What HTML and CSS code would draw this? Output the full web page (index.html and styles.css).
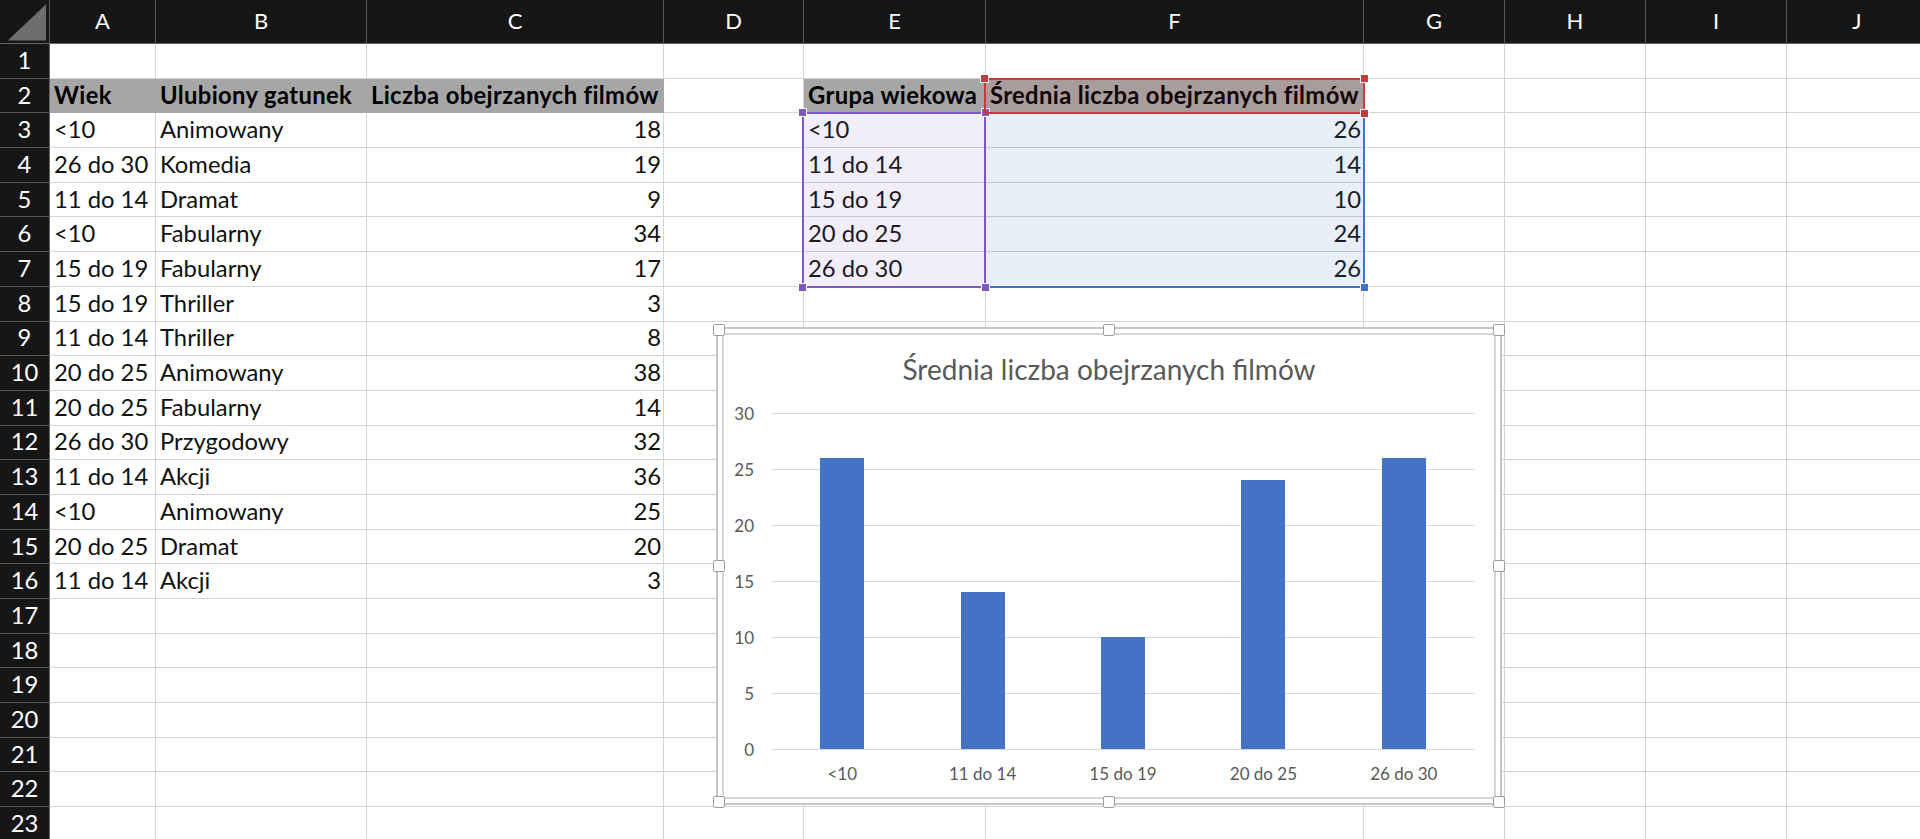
FILE: index.html
```html
<!DOCTYPE html>
<html lang="pl">
<head>
<meta charset="utf-8">
<title>Arkusz</title>
<link rel="stylesheet" href="styles.css">
</head>
<body>
<div class="sheet-wrap">
  <div class="sheet">
    <div class="corner"><svg viewBox="0 0 50 44" width="50" height="44"><polygon points="8,42 47,42 47,5" fill="#6e6e6e"/></svg></div>
    <div class="ch">A</div><div class="ch">B</div><div class="ch">C</div><div class="ch">D</div><div class="ch">E</div><div class="ch">F</div><div class="ch">G</div><div class="ch">H</div><div class="ch">I</div><div class="ch">J</div>

    <div class="rh">1</div><div></div><div></div><div></div><div></div><div></div><div></div><div></div><div></div><div></div><div></div>

    <div class="rh">2</div><div class="hd">Wiek</div><div class="hd">Ulubiony gatunek</div><div class="hd">Liczba obejrzanych filmów</div><div></div><div class="hd">Grupa wiekowa</div><div class="hd">Średnia liczba obejrzanych filmów</div><div></div><div></div><div></div><div></div>

    <div class="rh">3</div><div>&lt;10</div><div>Animowany</div><div class="num">18</div><div></div><div>&lt;10</div><div class="num">26</div><div></div><div></div><div></div><div></div>
    <div class="rh">4</div><div>26 do 30</div><div>Komedia</div><div class="num">19</div><div></div><div>11 do 14</div><div class="num">14</div><div></div><div></div><div></div><div></div>
    <div class="rh">5</div><div>11 do 14</div><div>Dramat</div><div class="num">9</div><div></div><div>15 do 19</div><div class="num">10</div><div></div><div></div><div></div><div></div>
    <div class="rh">6</div><div>&lt;10</div><div>Fabularny</div><div class="num">34</div><div></div><div>20 do 25</div><div class="num">24</div><div></div><div></div><div></div><div></div>
    <div class="rh">7</div><div>15 do 19</div><div>Fabularny</div><div class="num">17</div><div></div><div>26 do 30</div><div class="num">26</div><div></div><div></div><div></div><div></div>
    <div class="rh">8</div><div>15 do 19</div><div>Thriller</div><div class="num">3</div><div></div><div></div><div></div><div></div><div></div><div></div><div></div>
    <div class="rh">9</div><div>11 do 14</div><div>Thriller</div><div class="num">8</div><div></div><div></div><div></div><div></div><div></div><div></div><div></div>
    <div class="rh">10</div><div>20 do 25</div><div>Animowany</div><div class="num">38</div><div></div><div></div><div></div><div></div><div></div><div></div><div></div>
    <div class="rh">11</div><div>20 do 25</div><div>Fabularny</div><div class="num">14</div><div></div><div></div><div></div><div></div><div></div><div></div><div></div>
    <div class="rh">12</div><div>26 do 30</div><div>Przygodowy</div><div class="num">32</div><div></div><div></div><div></div><div></div><div></div><div></div><div></div>
    <div class="rh">13</div><div>11 do 14</div><div>Akcji</div><div class="num">36</div><div></div><div></div><div></div><div></div><div></div><div></div><div></div>
    <div class="rh">14</div><div>&lt;10</div><div>Animowany</div><div class="num">25</div><div></div><div></div><div></div><div></div><div></div><div></div><div></div>
    <div class="rh">15</div><div>20 do 25</div><div>Dramat</div><div class="num">20</div><div></div><div></div><div></div><div></div><div></div><div></div><div></div>
    <div class="rh">16</div><div>11 do 14</div><div>Akcji</div><div class="num">3</div><div></div><div></div><div></div><div></div><div></div><div></div><div></div>
    <div class="rh">17</div><div></div><div></div><div></div><div></div><div></div><div></div><div></div><div></div><div></div><div></div>
    <div class="rh">18</div><div></div><div></div><div></div><div></div><div></div><div></div><div></div><div></div><div></div><div></div>
    <div class="rh">19</div><div></div><div></div><div></div><div></div><div></div><div></div><div></div><div></div><div></div><div></div>
    <div class="rh">20</div><div></div><div></div><div></div><div></div><div></div><div></div><div></div><div></div><div></div><div></div>
    <div class="rh">21</div><div></div><div></div><div></div><div></div><div></div><div></div><div></div><div></div><div></div><div></div>
    <div class="rh">22</div><div></div><div></div><div></div><div></div><div></div><div></div><div></div><div></div><div></div><div></div>
    <div class="rh">23</div><div></div><div></div><div></div><div></div><div></div><div></div><div></div><div></div><div></div><div></div>
  </div>

  <div class="rng rng-blue"><span class="hdl br"></span></div>
  <div class="rng rng-purple"><span class="hdl tl"></span><span class="hdl tr"></span><span class="hdl bl"></span><span class="hdl br"></span></div>
  <div class="rng rng-red"><span class="hdl tl"></span><span class="hdl tr"></span><span class="hdl br"></span></div>

  <div class="chart">
    <div class="chart-inner">
      <div class="chart-title">Średnia liczba obejrzanych filmów</div>
      <div class="chart-body">
        <div class="yaxis"><span>30</span><span>25</span><span>20</span><span>15</span><span>10</span><span>5</span><span>0</span></div>
        <div class="plot">
          <div class="gridlines"><i></i><i></i><i></i><i></i><i></i><i></i><i></i></div>
          <div class="bars">
            <div class="slot"><div class="bar" style="height:291.2px"></div></div>
            <div class="slot"><div class="bar" style="height:156.8px"></div></div>
            <div class="slot"><div class="bar" style="height:112px"></div></div>
            <div class="slot"><div class="bar" style="height:268.8px"></div></div>
            <div class="slot"><div class="bar" style="height:291.2px"></div></div>
          </div>
        </div>
        <div class="xaxis"><span>&lt;10</span><span>11 do 14</span><span>15 do 19</span><span>20 do 25</span><span>26 do 30</span></div>
      </div>
    </div>
    <span class="cbh tl"></span><span class="cbh tm"></span><span class="cbh tr"></span>
    <span class="cbh ml"></span><span class="cbh mr"></span>
    <span class="cbh bl"></span><span class="cbh bm"></span><span class="cbh br"></span>
  </div>
</div>
</body>
</html>
```

FILE: styles.css
```css
* { box-sizing: border-box; }
html, body { margin: 0; padding: 0; background: #fff; overflow: hidden; }
body { font-family: Lato, "Open Sans", sans-serif; color: #000; }

.sheet-wrap { position: relative; width: 1920px; height: 839px; overflow: hidden; }

.sheet {
  display: grid;
  grid-template-columns: 50px 106px 211px 297px 140px 182px 378px 141px 141px 141px 141px;
  grid-template-rows: 44px repeat(23, 34.7px);
  width: max-content;
}
.sheet > div {
  border-right: 1px solid #d4d4d4;
  border-bottom: 1px solid #d4d4d4;
  white-space: nowrap;
  font-size: 23.8px;
  line-height: 1;
  display: flex;
  align-items: flex-end;
  padding: 0 4px 5px;
  color: #111;
}
.sheet > .corner { background: #161616; padding: 0; border-right-color: #555; border-bottom-color: #666; }
.corner svg { display: block; }
.sheet > .ch {
  background: #161616; color: #fff; justify-content: center; align-items: center;
  padding: 0 0 2px; font-size: 22px; border-right-color: #555; border-bottom-color: #666;
}
.sheet > .rh {
  background: #161616; color: #fff; justify-content: center; padding: 0 0 5px;
  border-right-color: #666; border-bottom-color: #555;
}
.sheet > .num { justify-content: flex-end; padding-right: 2px; }
.sheet > .hd { background: #a6a6a6; font-weight: 700; border-color: #a6a6a6; letter-spacing: 0.35px; color: #000; }

/* range-finder highlights over the cells */
.rng { position: absolute; border: 2px solid; }
.rng-blue { left: 984px; top: 112.4px; width: 380.5px; height: 175.5px; border-color: #4472c4; background: rgba(68, 114, 196, 0.12); }
.rng-purple { left: 802px; top: 112.4px; width: 184px; height: 175.5px; border-color: #7d58c0; background: rgba(125, 88, 192, 0.1); }
.rng-red { left: 984px; top: 78px; width: 380.5px; height: 36px; border-color: #c23b3d; background: rgba(194, 59, 61, 0.09); }
.hdl { position: absolute; width: 9px; height: 9px; border: 1px solid #fff; }
.rng-blue .hdl { background: #4472c4; }
.rng-purple .hdl { background: #7d58c0; }
.rng-red .hdl { background: #c23b3d; }
.hdl.tl { left: -6px; top: -6px; }
.hdl.tr { right: -6px; top: -6px; }
.hdl.bl { left: -6px; bottom: -6px; }
.hdl.br { right: -6px; bottom: -6px; }

/* chart object floating over the sheet */
.chart {
  position: absolute; left: 716px; top: 327px; width: 786px; height: 478px;
  border: 2px solid #c6c6c6; padding: 4px; background: #fff;
}
.chart-inner {
  height: 100%; border: 2px solid #d6d6d6; background: #fff;
  display: flex; flex-direction: column; padding-top: 17px;
}
.chart-title { text-align: center; font-size: 28px; line-height: 34px; color: #595959; }
.chart-body { display: grid; grid-template-columns: 48px 702px; margin-top: 27px; }
.yaxis { display: flex; flex-direction: column; justify-content: space-between; height: 337px; padding-right: 18px; }
.yaxis span { height: 1px; display: flex; align-items: center; justify-content: flex-end; font-size: 17px; color: #595959; }
.plot { display: grid; height: 337px; }
.gridlines, .bars { grid-area: 1 / 1; }
.gridlines { display: flex; flex-direction: column; justify-content: space-between; }
.gridlines i { display: block; height: 1px; background: #d9d9d9; }
.bars { display: flex; align-items: flex-end; padding-bottom: 1px; }
.slot { flex: 1; display: flex; justify-content: center; }
.bar { width: 44px; background: #4472c4; }
.xaxis { grid-column: 2; display: flex; margin-top: 14px; }
.xaxis span { flex: 1; text-align: center; font-size: 17px; line-height: 20px; color: #595959; }

.cbh { position: absolute; width: 12px; height: 12px; background: #fff; border: 1px solid #9c9c9c; border-radius: 2px; }
.cbh.tl { left: -5px; top: -5px; }
.cbh.tm { left: calc(50% - 6px); top: -5px; }
.cbh.tr { right: -5px; top: -5px; }
.cbh.ml { left: -5px; top: calc(50% - 6px); }
.cbh.mr { right: -5px; top: calc(50% - 6px); }
.cbh.bl { left: -5px; bottom: -5px; }
.cbh.bm { left: calc(50% - 6px); bottom: -5px; }
.cbh.br { right: -5px; bottom: -5px; }
```
